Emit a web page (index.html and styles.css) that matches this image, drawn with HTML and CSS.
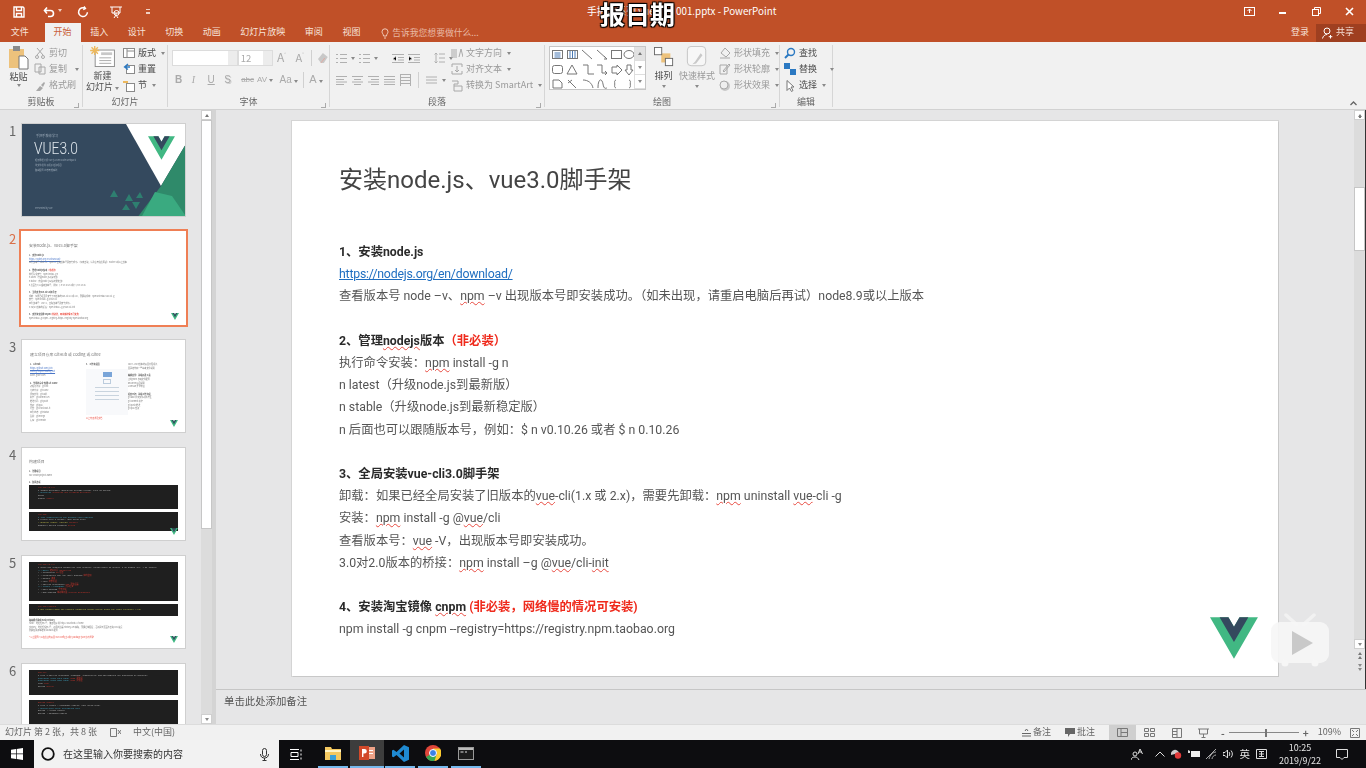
FILE: index.html
```html
<!DOCTYPE html>
<html lang="zh-CN">

<head>
    <meta charset="UTF-8">
    <meta name="viewport" content="width=device-width, initial-scale=1.0">
    <title>手把手系列 vue3.0 - 001.pptx - PowerPoint</title>
    <link rel="stylesheet" href="styles.css">
</head>

<body>
<svg class="defs" width="0" height="0">
    <defs>
        <g id="vue">
            <path fill="#41b883" d="M161.1 0l-30.2 52.4L100.6 0H0l130.9 226.7L261.7 0z"/>
            <path fill="#34495e" d="M161.1 0l-30.2 52.4L100.6 0H52.3l78.6 136L209.4 0z"/>
        </g>
    </defs>
</svg>
<div class="app">
    <header class="titlebar">
        <div class="qat">
            <svg class="qa-save" width="14" height="14" viewBox="0 0 14 14" fill="none" stroke="#fff" stroke-width="1.4"><path d="M2 2h9l1 1v9H2z"/><path d="M4.5 2v3.5h5V2M4.5 12V8.5h5V12"/></svg>
            <svg class="qa-undo" width="12" height="12" viewBox="0 0 12 12" fill="none" stroke="#fff" stroke-width="1.6"><path d="M1.5 4.5h6a3 3 0 0 1 0 6H5M4 1.5l-2.5 3 2.5 3"/></svg>
            <span class="qa-caret"></span>
            <svg class="qa-redo" width="12" height="12" viewBox="0 0 12 12" fill="none" stroke="#fff" stroke-width="1.5"><path d="M8 2.2a4.4 4.4 0 1 0 2.4 4M7 .5l1.4 2-2.2 1.2"/></svg>
            <svg class="qa-show" width="14" height="14" viewBox="0 0 14 14" fill="none" stroke="#fff" stroke-width="1"><path d="M1 2h12M3 2v6h8V2M7 8v2M5 13l2-3 2 3"/><circle cx="7.5" cy="8" r="2.5"/></svg>
            <span class="qa-more"></span>
        </div>
        <div class="doc-name">手把手系列 vue3.0 - 001.pptx - PowerPoint</div>
        <div class="win-btns">
            <svg width="11" height="9" viewBox="0 0 11 9" fill="none" stroke="#fff"><rect x=".5" y=".5" width="10" height="8"/><path d="M5.5 2v4M3.5 4l2-2 2 2"/></svg>
            <svg width="8" height="8" viewBox="0 0 8 8"><rect y="4" width="7" height="2" fill="#fff"/></svg>
            <svg width="9" height="9" viewBox="0 0 9 9" fill="none" stroke="#fff"><rect x=".5" y="2.5" width="6" height="6"/><path d="M2.5 2V.5h6v6H7"/></svg>
            <svg width="9" height="9" viewBox="0 0 9 9" stroke="#fff" stroke-width="1.6"><path d="M1 1l7 7M8 1L1 8"/></svg>
        </div>
    </header>

    <nav class="tabs">
        <a class="tab tab-file">文件</a>
        <a class="tab tab-on">开始</a>
        <a class="tab">插入</a>
        <a class="tab">设计</a>
        <a class="tab">切换</a>
        <a class="tab">动画</a>
        <a class="tab">幻灯片放映</a>
        <a class="tab">审阅</a>
        <a class="tab">视图</a>
        <div class="tellme">
            <svg width="8" height="11" viewBox="0 0 8 11" fill="none" stroke="#f0c9b8"><path d="M2.5 8C2.5 6 1 5.5 1 3.8a3 3 0 0 1 6 0C7 5.5 5.5 6 5.5 8zM3 10h2"/></svg>
            <span>告诉我您想要做什么...</span>
        </div>
        <div class="tabs-right">
            <span class="login">登录</span>
            <span class="share">
                <svg width="11" height="12" viewBox="0 0 11 12" fill="none" stroke="#fff"><circle cx="5" cy="4" r="3"/><path d="M.5 11.5C1 9 3 7.5 5 7.5M8.5 8v3.5M6.7 9.7h3.6"/></svg>
                共享
            </span>
        </div>
    </nav>

    <section class="ribbon">
        <div class="grp grp-clip">
            <div class="grp-body">
                <div class="big big-paste">
                    <svg width="22" height="24" viewBox="0 0 22 24"><rect x="1" y="3" width="15" height="19" fill="#edc27c"/><rect x="5" y="0" width="7" height="5" fill="#8a8a8a"/><path d="M11 10h6l3 3v10h-9z" fill="#fff" stroke="#777"/></svg>
                    <span class="dark">粘贴</span>
                    <span class="caret"></span>
                </div>
                <div class="col">
                    <div class="item"><svg width="12" height="12" viewBox="0 0 12 12" fill="none" stroke="#a8a8a8"><path d="M3 1l6 7M9 1L3 8"/><circle cx="3" cy="10" r="1.5"/><circle cx="9" cy="10" r="1.5"/></svg>剪切</div>
                    <div class="item"><svg width="12" height="12" viewBox="0 0 12 12" fill="none" stroke="#a8a8a8"><path d="M1 1h6v8H1zM5 4h6v7H5z"/></svg>复制<span class="caret caret-sp"></span></div>
                    <div class="item"><svg width="12" height="12" viewBox="0 0 12 12"><path d="M2 11l4-5 3 2-3 3zM7 5l3-3 1 1-2 4z" fill="#a8a8a8"/></svg>格式刷</div>
                </div>
            </div>
            <div class="grp-label">剪贴板<i class="launch"></i></div>
        </div>

        <div class="grp grp-slides">
            <div class="grp-body">
                <div class="big big-new">
                    <svg width="25" height="22" viewBox="0 0 27 24"><rect x="5.5" y="5.5" width="21" height="18" fill="#fff" stroke="#8a8a8a"/><path d="M10 14h13M10 17h13M10 20h13" stroke="#a5a5a5"/><rect x="12" y="8" width="12" height="3" fill="#c8c8c8"/><path d="M5 1v10M0 6h10M1.5 2.5l7 7M8.5 2.5l-7 7" stroke="#edb85c" stroke-width="1.5"/></svg>
                    <span class="dark">新建</span>
                    <span class="dark">幻灯片<i class="caret caret-in"></i></span>
                </div>
                <div class="col col-slides">
                    <div class="item dark"><svg width="12" height="12" viewBox="0 0 12 12" fill="#fff" stroke="#8a8a8a"><rect x=".5" y="1.5" width="11" height="9"/><path d="M4 1.5v9M4 4h7.5"/></svg>版式<i class="caret caret-in"></i></div>
                    <div class="item dark"><svg width="12" height="12" viewBox="0 0 12 12" fill="#fff" stroke="#2b79c2"><rect x="3.5" y="2.5" width="8" height="8" stroke="#8a8a8a"/><path d="M5 1L1.5 4 5 6.5M2 4h5" fill="none" stroke-width="1.3"/></svg>重置</div>
                    <div class="item dark"><svg width="12" height="12" viewBox="0 0 12 12" fill="#fff" stroke="#8a8a8a"><rect x="3.5" y="3.5" width="8" height="8"/><path d="M0 2h5" stroke="#edb85c" stroke-width="2"/></svg>节<i class="caret caret-in"></i></div>
                </div>
            </div>
            <div class="grp-label">幻灯片</div>
        </div>

        <div class="grp grp-font">
            <div class="grp-body font-rows">
                <div class="font-top">
                    <div class="combo combo-name"><i class="combo-arrow"></i></div>
                    <div class="combo combo-size">12<i class="combo-arrow"></i></div>
                    <span class="aa aa-lg">A<sup>˄</sup></span>
                    <span class="aa">A<sup>˅</sup></span>
                    <b class="vbar"></b>
                    <svg width="12" height="12" viewBox="0 0 12 12"><path d="M1 7l5-6 5 4-4 6H4z" fill="#c8c8c8"/><path d="M4 11l4-5" stroke="#e2a9a0"/></svg>
                </div>
                <div class="font-bottom">
                    <span class="fmt fb">B</span>
                    <span class="fmt fi">I</span>
                    <span class="fmt fu">U</span>
                    <span class="fmt fs">S</span>
                    <span class="fmt fa">abc</span>
                    <span class="fmt fav">AV<i class="caret caret-in"></i></span>
                    <span class="fmt faa">Aa<i class="caret caret-in"></i></span>
                    <b class="vbar"></b>
                    <span class="fmt fcol">A<i class="caret caret-in"></i></span>
                </div>
            </div>
            <div class="grp-label">字体<i class="launch"></i></div>
        </div>

        <div class="grp grp-para">
            <div class="grp-body">
                <div class="para-left">
                    <div class="para-row">
                        <svg width="11" height="11" viewBox="0 0 11 11" stroke="#b0b0b0"><path d="M0 1.5h2M4 1.5h7M0 5.5h2M4 5.5h7M0 9.5h2M4 9.5h7"/></svg><i class="caret"></i>
                        <svg width="11" height="11" viewBox="0 0 11 11" stroke="#b0b0b0"><path d="M0 1.5h2M4 1.5h7M0 5.5h2M4 5.5h7M0 9.5h2M4 9.5h7"/></svg><i class="caret"></i>
                        <b class="vbar"></b>
                        <svg width="12" height="11" viewBox="0 0 12 11" stroke="#b0b0b0"><path d="M0 1.5h12M6 4.5h6M6 7h6M0 9.5h12M4 3.5L1 5.7l3 2"/></svg>
                        <svg width="12" height="11" viewBox="0 0 12 11" stroke="#b0b0b0"><path d="M0 1.5h12M6 4.5h6M6 7h6M0 9.5h12M1 3.5l3 2.2-3 2"/></svg>
                        <b class="vbar"></b>
                        <svg width="11" height="12" viewBox="0 0 11 12" stroke="#b0b0b0"><path d="M2 1v10M5 2h6M5 6h6M5 10h6M.5 2.5L2 1l1.5 1.5M.5 9.5L2 11l1.5-1.5" fill="none"/></svg><i class="caret"></i>
                    </div>
                    <div class="para-row para-row2">
                        <svg width="11" height="9" viewBox="0 0 11 9" stroke="#b0b0b0"><path d="M0 .5h11M0 3.5h8M0 6h11M0 8.5h8"/></svg>
                        <svg width="11" height="9" viewBox="0 0 11 9" stroke="#b0b0b0"><path d="M0 .5h11M2 3.5h7M0 6h11M2 8.5h7"/></svg>
                        <svg width="11" height="9" viewBox="0 0 11 9" stroke="#b0b0b0"><path d="M0 .5h11M3 3.5h8M0 6h11M3 8.5h8"/></svg>
                        <svg width="11" height="9" viewBox="0 0 11 9" stroke="#b0b0b0"><path d="M0 .5h11M0 3.5h11M0 6h11M0 8.5h11"/></svg>
                        <svg width="11" height="12" viewBox="0 0 11 12" stroke="#b0b0b0"><path d="M0 .5h11M0 3.5h11M0 6.5h11M0 9.5h11M.5 0v12M10.5 0v12"/></svg>
                        <b class="vbar vbar-sp"></b>
                        <svg width="11" height="8" viewBox="0 0 11 8" stroke="#b0b0b0"><path d="M0 1h11M0 4h11M0 7h11"/></svg><i class="caret"></i>
                    </div>
                </div>
                <div class="col">
                    <div class="item"><svg width="12" height="12" viewBox="0 0 12 12" stroke="#a8a8a8" fill="none"><path d="M1 2v9M3 2v9M5 2v9M8 10l2-8 2 8"/></svg>文字方向<i class="caret caret-in"></i></div>
                    <div class="item"><svg width="12" height="12" viewBox="0 0 12 12" stroke="#a8a8a8" fill="none"><path d="M1 1h10M1 11h10M1 1v3M11 1v3M1 11V8M11 11V8M6 3v6M4 7l2 2 2-2"/></svg>对齐文本<i class="caret caret-in"></i></div>
                    <div class="item"><svg width="12" height="12" viewBox="0 0 12 12" stroke="#a8a8a8" fill="none"><path d="M1 1h6v3H3v7M3 6h8v5H3"/></svg>转换为 SmartArt<i class="caret caret-in"></i></div>
                </div>
            </div>
            <div class="grp-label">段落<i class="launch"></i></div>
        </div>

        <div class="grp grp-draw">
            <div class="grp-body">
                <div class="gallery">
                    <svg width="84" height="43" viewBox="0 0 84 43" fill="none" stroke="#777">
                        <rect x="2.5" y="3.5" width="10" height="8"/><path d="M4.5 6h6M4.5 8h6M4.5 10h6" stroke="#4a7ab5"/>
                        <rect x="17.5" y="3.5" width="10" height="8"/><path d="M20 4v7M22.5 4v7M25 4v7" stroke="#4a7ab5"/>
                        <path d="M32 3l10 9M47 3l10 9M54 9l3 3-3 0"/>
                        <rect x="61.5" y="3.5" width="10" height="8"/><ellipse cx="79" cy="7.5" rx="5" ry="4"/>
                        <rect x="2.5" y="18.5" width="10" height="8" rx="2"/><path d="M22 18l5 9H17zM33 18h5v9h6M47 18h5v8h5M55 24l2 2-2 2M62 20h5v-2l5 5-5 5v-2h-5zM77 18h4v5h2l-4 5-4-5h2z"/>
                        <path d="M3 33h6l3 3v5H3zM18 33l8 8M22 33l-4 3M33 33c5 0 9 3 10 8M48 41c0-10 4-10 5-4s3 4 4 4M66 33c-3 1 0 4-2 4 2 0-1 3 2 4M79 33c3 1 0 4 2 4-2 0 1 3-2 4"/>
                    </svg>
                    <div class="gallery-btns">
                        <span class="gb-off"><i class="tri-up"></i></span>
                        <span><i class="caret"></i></span>
                        <span><i class="caret caret-bar"></i></span>
                    </div>
                </div>
                <div class="big big-arrange">
                    <svg width="20" height="20" viewBox="0 0 22 22"><rect x="8" y="7" width="10" height="10" fill="#edc27c"/><rect x=".5" y=".5" width="8" height="8" fill="#fff" stroke="#666"/><rect x="12.5" y="12.5" width="8" height="8" fill="#fff" stroke="#666"/></svg>
                    <span class="dark">排列</span>
                    <span class="caret"></span>
                </div>
                <div class="big big-style">
                    <svg width="22" height="22" viewBox="0 0 22 24"><rect x=".5" y=".5" width="20" height="21" rx="4" fill="#f7f7f7" stroke="#c2c2c2"/><path d="M15 8l-6 9-3 3 4-1 7-9z" fill="#c9c9c9"/></svg>
                    <span>快速样式</span>
                    <span class="caret"></span>
                </div>
                <div class="col">
                    <div class="item"><svg width="12" height="12" viewBox="0 0 12 12" fill="none" stroke="#a8a8a8"><path d="M6 1l5 5-4 4-5-4zM1 11h10"/></svg>形状填充<i class="caret caret-in"></i></div>
                    <div class="item"><svg width="12" height="12" viewBox="0 0 12 12" fill="none" stroke="#a8a8a8"><path d="M1 2h7v9H1zM4 8l6-7 1 1-6 7z"/></svg>形状轮廓<i class="caret caret-in"></i></div>
                    <div class="item"><svg width="12" height="12" viewBox="0 0 12 12"><circle cx="6" cy="6" r="5" fill="#c8c8c8"/><circle cx="5" cy="5" r="4" fill="#eee" stroke="#a8a8a8"/></svg>形状效果<i class="caret caret-in"></i></div>
                </div>
            </div>
            <div class="grp-label">绘图<i class="launch"></i></div>
        </div>

        <div class="grp grp-edit">
            <div class="grp-body">
                <div class="col col-edit">
                    <div class="item dark"><svg width="12" height="12" viewBox="0 0 12 12" fill="none" stroke="#2b79c2" stroke-width="1.4"><circle cx="7" cy="5" r="3.5"/><path d="M4.5 7.5L1 11" stroke-width="2"/></svg>查找</div>
                    <div class="item dark"><svg width="12" height="12" viewBox="0 0 12 12"><rect x="0" y="0" width="6" height="6" fill="#2b79c2"/><rect x="6" y="6" width="6" height="6" fill="#2b79c2"/></svg>替换<i class="caret caret-far"></i></div>
                    <div class="item dark"><svg width="12" height="12" viewBox="0 0 12 12" fill="#fff" stroke="#777"><path d="M3 .5v10l2.5-2.5L7.5 11.5 9 10.5 7 7h3z"/></svg>选择<i class="caret caret-in"></i></div>
                </div>
            </div>
            <div class="grp-label">编辑</div>
        </div>
        <svg class="collapse" width="7" height="5" viewBox="0 0 7 5" fill="none" stroke="#666" stroke-width="1.3"><path d="M.5 4l3-3 3 3"/></svg>
    </section>

    <main class="workspace">
        <aside class="thumbs">
            <div class="thumb-list">
                <div class="thumb-row">
                    <span class="num">1</span>
                    <div class="thumb">
                        <svg class="cover" viewBox="0 0 165 94">
                            <rect width="165" height="94" fill="#34495e"/>
                            <path d="M104 0h61v18l-26 44z" fill="#fff"/>
                            <path d="M139 62l26-44v76h-50z" fill="#2f8a6a"/>
                            <path d="M150 72l15 22h-46l14-26z" fill="#3aaa80"/>
                            <path d="M92 66l4 7h-8zM107 70l4 7h-8zM118 68l3 6h-7zM100 86l4-6 4 6zM110 78h8l-4 7z" fill="#2e7f70"/>
                            <svg x="126" y="12" width="27" height="24" viewBox="0 0 262 227"><use href="#vue"/></svg>
                            <text class="cv-sub" x="14" y="13">手把手教你学习</text>
                            <text class="cv-big" x="12" y="30" textLength="44" lengthAdjust="spacingAndGlyphs">VUE3.0</text>
                            <text class="cv-sm" x="13" y="37">框架原理分析  Vue.js  Vue3  Node  Webpack</text>
                            <text class="cv-sm" x="13" y="42">单文件组件  手把手搭建项目</text>
                            <text class="cv-sm" x="13" y="47">路由配置 状态管理实践</text>
                            <text class="cv-sm" x="13" y="85">Presented by vue</text>
                        </svg>
                    </div>
                </div>
                <div class="thumb-row thumb-row-on">
                    <span class="num">2</span>
                    <div class="thumb thumb-on">
                        <h4>安装node.js、vue3.0脚手架</h4>
                        <p><b>1、安装node.js</b></p>
                        <p class="lnk">https://nodejs.org/en/download/</p>
                        <p>查看版本号 node –v、npm –v 出现版本号即安装成功。（如未出现，请重启电脑后再试）node8.9或以上版本</p>
                        <p class="gap"><b>2、管理nodejs版本</b><b class="red">（非必装）</b></p>
                        <p>执行命令安装：npm install -g n</p>
                        <p>n latest（升级node.js到最新版）</p>
                        <p>n stable（升级node.js到最新稳定版）</p>
                        <p>n 后面也可以跟随版本号，例如：$ n v0.10.26 或者 $ n 0.10.26</p>
                        <p class="gap"><b>3、全局安装vue-cli3.0脚手架</b></p>
                        <p>卸载：如果已经全局安装了旧版本的vue-cli(1.x 或 2.x)，需要先卸载：npm uninstall vue-cli -g</p>
                        <p>安装：npm install -g @vue/cli</p>
                        <p>查看版本号：vue -V，出现版本号即安装成功。</p>
                        <p>3.0对2.0版本的桥接：npm install –g @vue/cli-init</p>
                        <p class="gap"><b>4、安装淘宝镜像 cnpm</b> <b class="red">(非必装，网络慢的情况可安装)</b></p>
                        <p>npm install -g cnpm --registry=https://registry.npm.taobao.org</p>
                        <svg class="mini-vue" viewBox="0 0 262 227"><use href="#vue"/></svg>
                    </div>
                </div>
                <div class="thumb-row">
                    <span class="num">3</span>
                    <div class="thumb thumb-three">
                        <h4>建立项目仓库 GitHub 或 Coding 或 Gitee</h4>
                        <div class="three-cols">
                            <div>
                                <p><b>1、GitHub</b></p>
                                <p class="lnk">https://github.com/join</p>
                                <p class="lnk">Coding: https://coding.net</p>
                                <p>Gitee: gitee.com</p>
                                <p class="gap"><b>2、常用的命令 新建 Git clone</b></p>
                                <p>初始化仓库：git init</p>
                                <p>克隆仓库：git clone</p>
                                <p>添加文件：git add .</p>
                                <p>提交：git commit -m</p>
                                <p>推送代码：git push</p>
                                <p>拉取：git pull</p>
                                <p>分支：git checkout -b</p>
                                <p>查看状态：git status</p>
                                <p>合并：git merge</p>
                                <p>远程：git remote</p>
                            </div>
                            <div>
                                <p><b>3、工作流程图</b></p>
                                <div class="flow"><i class="flow-a"></i><i class="flow-b"></i><i class="flow-c"></i><i class="flow-c"></i><i class="flow-c"></i><i class="flow-c"></i></div>
                                <p class="red">以上内容详见文档</p>
                            </div>
                            <div>
                                <p>Vue3 - vue3版本的项目管理规范</p>
                                <p>目录结构和一些基本文件说明</p>
                                <p class="gap"><b>编辑文件：前端开发工具</b></p>
                                <p>.gitignore 忽略文件配置</p>
                                <p>README 项目说明</p>
                                <p>LICENSE 开源协议</p>
                                <p class="gap"><b>提交代码：前端工作流程</b></p>
                                <p>git add 添加文件到暂存区</p>
                                <p>git commit 提交</p>
                                <p>git push 推送</p>
                                <p>git pull 拉取</p>
                            </div>
                        </div>
                        <svg class="mini-vue" viewBox="0 0 262 227"><use href="#vue"/></svg>
                    </div>
                </div>
                <div class="thumb-row">
                    <span class="num">4</span>
                    <div class="thumb thumb-code">
                        <h4>构建项目</h4>
                        <p><b>1、创建项目</b></p>
                        <p>vue create project-name</p>
                        <p class="gap"><b>2、配置选项</b></p>
                        <div class="code code-a">
                            <p class="c-red">Vue CLI v3.0.0</p>
                            <p>? Target directory /Users/vue already exists. Pick an action:</p>
                            <p class="c-blue">&gt; Overwrite  <span class="c-red">overwrite the existing directory</span></p>
                            <p>  Merge</p>
                            <p>  Cancel <span class="c-red">cancel</span></p>
                        </div>
                        <div class="code code-b">
                            <p class="c-red">Vue CLI</p>
                            <p class="c-blue">? Your connection to the default yarn registry</p>
                            <p>? Please pick a preset: (Use arrow keys)</p>
                            <p class="c-yel">&gt; default (babel, eslint)  <span class="c-red">default</span></p>
                            <p>  Manually select features  <span class="c-red">select</span></p>
                        </div>
                        <svg class="mini-vue" viewBox="0 0 262 227"><use href="#vue"/></svg>
                    </div>
                </div>
                <div class="thumb-row">
                    <span class="num">5</span>
                    <div class="thumb thumb-code thumb-five">
                        <div class="code code-c">
                            <p class="c-red">Vue CLI v3.0.0</p>
                            <p>? Check the features needed for your project: (Press space to select, a to toggle all, i to invert)</p>
                            <p class="c-blue">(*) Babel  <span class="c-red">转码工具 JavaScript</span></p>
                            <p>( ) TypeScript  <span class="c-red">TS 语言</span></p>
                            <p>( ) Progressive Web App (PWA) Support  <span class="c-red">离线应用</span></p>
                            <p>( ) Router  <span class="c-red">路由</span></p>
                            <p>( ) Vuex  <span class="c-red">状态管理</span></p>
                            <p>( ) CSS Pre-processors  <span class="c-red">CSS 预处理器</span></p>
                            <p class="c-blue">(*) Linter / Formatter  <span class="c-red">代码检查</span></p>
                            <p>( ) Unit Testing  <span class="c-red">单元测试</span></p>
                            <p>( ) E2E Testing  <span class="c-red">端到端测试 Cypress Nightwatch</span></p>
                        </div>
                        <div class="code code-d">
                            <p class="c-red">Vue CLI project</p>
                            <p class="c-yel">? Use history mode for router? (Requires proper server setup for index fallback) (Y/n)</p>
                        </div>
                        <p class="tight"><b>路由模式说明 Hash History</b></p>
                        <p class="tight">Hash：地址栏有#号，兼容性好 例 http://localhost/#/home</p>
                        <p class="tight">History：地址栏没有#号，使用浏览器 History API 实现，需要后端配合，否则刷新页面会出现 404 错误</p>
                        <p class="tight">需要在服务端增加 fallback 配置</p>
                        <p class="gap red">* 以上配置可以在后续的项目 vue.config.js 或者 package.json 修改调整</p>
                        <svg class="mini-vue" viewBox="0 0 262 227"><use href="#vue"/></svg>
                    </div>
                </div>
                <div class="thumb-row">
                    <span class="num">6</span>
                    <div class="thumb thumb-code thumb-five">
                        <div class="code code-e">
                            <p class="c-red">CSS Pre</p>
                            <p>? Pick a CSS pre-processor (PostCSS, Autoprefixer and CSS Modules are supported by default):</p>
                            <p class="c-blue">  Sass/SCSS (with dart-sass)  <span class="c-red">Sass 预处理</span></p>
                            <p class="c-blue">  Sass/SCSS (with node-sass)  <span class="c-red">Sass 预处理</span></p>
                            <p>  Less  <span class="c-red">Less</span></p>
                            <p>  Stylus  <span class="c-red">Stylus</span></p>
                        </div>
                        <div class="code code-f">
                            <p class="c-red">ESLint config</p>
                            <p>? Pick a linter / formatter config: (Use arrow keys)</p>
                            <p class="c-blue">&gt; ESLint with error prevention only</p>
                            <p>  ESLint + Airbnb config</p>
                            <p>  ESLint + Standard config</p>
                        </div>
                    </div>
                </div>
            </div>
            <div class="thumb-scroll">
                <span class="sb-btn"><i class="tri-up"></i></span>
                <span class="sb-thumb"></span>
                <span class="sb-space"></span>
                <span class="sb-btn"><i class="caret"></i></span>
            </div>
        </aside>
        <div class="splitter"></div>

        <div class="editor">
            <div class="stage">
                <article class="slide">
                    <h1>安装node.js、vue3.0脚手架</h1>
                    <p><b>1、安装node.js</b></p>
                    <p><a class="link">https://nodejs.org/en/download/</a></p>
                    <p>查看版本号 node –v、<u>npm</u> –v 出现版本号即安装成功。（如未出现，请重启电脑后再试）node8.9或以上版本</p>
                    <p class="blank"><b>2、管理<u>nodejs</u>版本</b><b class="red">（非必装）</b></p>
                    <p>执行命令安装：<u>npm</u> install -g n</p>
                    <p>n latest（升级node.js到最新版）</p>
                    <p>n stable（升级node.js到最新稳定版）</p>
                    <p>n 后面也可以跟随版本号，例如：$ n v0.10.26 或者 $ n 0.10.26</p>
                    <p class="blank"><b>3、全局安装vue-cli3.0脚手架</b></p>
                    <p>卸载：如果已经全局安装了旧版本的<u>vue</u>-cli(1.x 或 2.x)，需要先卸载：<u>npm</u> uninstall <u>vue</u>-cli -g</p>
                    <p>安装：<u>npm</u> install -g @<u>vue</u>/cli</p>
                    <p>查看版本号：<u>vue</u> -V，出现版本号即安装成功。</p>
                    <p>3.0对2.0版本的桥接：<u>npm</u> install –g @<u>vue</u>/cli-<u>init</u></p>
                    <p class="blank"><b>4、安装淘宝镜像 <u>cnpm</u></b> <b class="red">(非必装，网络慢的情况可安装)</b></p>
                    <p>npm install -g cnpm --registry=https://registry.npm.taobao.org</p>
                    <svg class="slide-logo" viewBox="0 0 262 227"><use href="#vue"/></svg>
                </article>
                <div class="stage-scroll">
                    <span class="sb-btn"><i class="tri-up tri-bar"></i></span>
                    <span class="sb-gap"></span>
                    <span class="sb-thumb2"></span>
                    <span class="sb-space"></span>
                    <span class="sb-btn"><i class="caret"></i></span>
                    <span class="page-btn"><i class="tri-up"></i><i class="tri-up"></i></span>
                    <span class="page-btn"><i class="caret"></i><i class="caret"></i></span>
                    <span class="sb-foot"></span>
                </div>
            </div>
            <div class="notes">单击此处添加备注</div>
        </div>
    </main>

    <footer class="status">
        <span class="st-page">幻灯片 第 2 张，共 8 张</span>
        <svg class="st-spell" width="11" height="10" viewBox="0 0 11 10" fill="none" stroke="#777"><path d="M.5.5h6v8h-6zM8 2l3 4M11 2L8 6"/></svg>
        <span class="st-lang">中文(中国)</span>
        <div class="st-right">
            <span class="st-btn"><svg width="9" height="9" viewBox="0 0 9 9" fill="none" stroke="#666"><path d="M0 5.5h9M0 8h9M3 3l1.5-2L6 3"/></svg>备注</span>
            <span class="st-btn"><svg width="10" height="9" viewBox="0 0 10 9"><path d="M0 0h10v6H5L3 9V6H0z" fill="#666"/></svg>批注</span>
            <span class="view view-on"><svg width="11" height="9" viewBox="0 0 11 9" fill="none" stroke="#777"><path d="M.5.5h10v8H.5zM4 .5v8M4 4.5h6"/></svg></span>
            <span class="view"><svg width="11" height="9" viewBox="0 0 11 9" fill="none" stroke="#777"><path d="M.5.5h4v3h-4zM6.5.5h4v3h-4zM.5 5.5h4v3h-4zM6.5 5.5h4v3h-4z"/></svg></span>
            <span class="view"><svg width="10" height="10" viewBox="0 0 10 10" fill="none" stroke="#777"><path d="M.5.5h9v9h-9zM5 .5v9M.5 3.5H5M.5 6.5H5"/></svg></span>
            <span class="view"><svg width="11" height="10" viewBox="0 0 11 10" fill="none" stroke="#777"><path d="M0 1h11M1.5 1v5h8V1M5.5 6v3M3.5 9.5h4"/></svg></span>
            <div class="zoom-bar">
                <span class="z-sign">-</span>
                <span class="z-track"><i class="z-knob"></i></span>
                <span class="z-sign">+</span>
            </div>
            <span class="z-pct">109%</span>
            <svg class="z-fit" width="10" height="10" viewBox="0 0 10 10" fill="none" stroke="#777"><path d="M.5.5h9v9h-9zM2 2l2 2M8 2L6 4M2 8l2-2M8 8L6 6"/></svg>
        </div>
    </footer>

    <div class="taskbar">
        <svg class="tb-start" width="12" height="12" viewBox="0 0 12 12" fill="#fff"><path d="M0 1.7L5 1v4.6H0zM5.7.9L12 0v5.6H5.7zM0 6.3h5V11l-5-.7zM5.7 6.3H12V12l-6.3-.9z"/></svg>
        <div class="tb-search">
            <svg width="14" height="14" viewBox="0 0 14 14" fill="none" stroke="#111" stroke-width="1.8"><circle cx="7" cy="7" r="5.8"/></svg>
            <span>在这里输入你要搜索的内容</span>
            <svg class="tb-mic" width="9" height="13" viewBox="0 0 9 13" fill="none" stroke="#333"><rect x="2.5" y=".5" width="4" height="8" rx="2"/><path d="M.5 6c0 3 2 4 4 4s4-1 4-4M4.5 10v2.5M2.5 12.5h4"/></svg>
        </div>
        <svg class="tb-view" width="12" height="11" viewBox="0 0 12 11" fill="none" stroke="#fff"><path d="M0 .5h9M0 10.5h9M1 3.5h7v4H1zM11 .5v2M11 4.5v2M11 8.5v2"/></svg>
        <span class="tb-app tb-first">
            <svg width="16" height="14" viewBox="0 0 16 14"><path d="M0 1h6l1 2h9v11H0z" fill="#f3c860"/><rect x="0" y="4" width="16" height="2" fill="#fff3c4"/><rect x="5" y="9" width="6" height="5" fill="#3aa0d8"/></svg>
        </span>
        <span class="tb-app tb-active">
            <svg width="16" height="16" viewBox="0 0 16 16"><rect x="5" y="2" width="11" height="12" fill="#eea287"/><rect x="9" y="5" width="5" height="1" fill="#fff"/><rect x="9" y="8" width="5" height="1" fill="#fff"/><rect x="0" y="1" width="10" height="14" fill="#d2492a"/><path d="M3 12V4h2.5a2.2 2.2 0 0 1 0 4.6H4.4V12z" fill="#fff"/></svg>
        </span>
        <span class="tb-app">
            <svg width="17" height="17" viewBox="0 0 17 17"><path d="M12 0l5 2.2v12.600L12 17 4.5 10 1.5 12.300 0 11.5V5.5l1.5-.8L4.5 7zM12 4.5L7.5 8.500l4.500 4z" fill="#1f8ad2"/></svg>
        </span>
        <span class="tb-app">
            <svg width="16" height="16" viewBox="0 0 16 16"><circle cx="8" cy="8" r="8" fill="#e0463a"/><path d="M8 8L1 12a8 8 0 0 0 8 4l3.5-4z" fill="#36a853"/><path d="M8 8l4 0-2.5 8A8 8 0 0 0 15 3.5H8z" fill="#fbcb2f"/><circle cx="8" cy="8" r="3.5" fill="#3b82e8" stroke="#fff"/></svg>
        </span>
        <span class="tb-app">
            <svg width="16" height="13" viewBox="0 0 16 13"><rect x=".5" y=".5" width="15" height="12" fill="#1c1c1c" stroke="#999"/><rect x="1" y="1" width="14" height="2" fill="#bbb"/><path d="M2.5 5h3M7 5h2" stroke="#ddd"/></svg>
        </span>
        <div class="tray">
            <svg width="12" height="11" viewBox="0 0 12 11" fill="none" stroke="#ddd"><circle cx="4" cy="5" r="2"/><path d="M0 11c0-2 2-3 4-3s3 1 4 3M9 0l2.5 5M9 0L7 5M8 3h3"/></svg>
            <svg class="tr-up" width="10" height="6" viewBox="0 0 10 6" fill="none" stroke="#ddd"><path d="M.5 5.5L5 1l4.5 4.5"/></svg>
            <svg width="11" height="10" viewBox="0 0 11 10"><path d="M0 6a4 4 0 0 1 8-2z" fill="#ccc"/><circle cx="7" cy="6.5" r="3.2" fill="#e03a3a"/></svg>
            <svg width="12" height="8" viewBox="0 0 12 8"><path d="M0 0l2 1v2H0z" fill="#ddd"/><rect x="3" y="1" width="9" height="6" fill="#eee"/></svg>
            <svg width="11" height="10" viewBox="0 0 11 10" fill="none" stroke="#aaa"><path d="M0 10L10 0M3 10C4 6 7 3 10 3M6 10c0-2 2-4 4-4"/></svg>
            <svg width="10" height="10" viewBox="0 0 10 10" fill="none" stroke="#ddd"><path d="M0 3.5h2L4.5 1v8L2 6.5H0zM6 3c1 1 1 3 0 4M8 1.5c1.800 2 1.800 5 0 7"/></svg>
            <span class="tr-ime">英</span>
            <svg width="11" height="10" viewBox="0 0 11 10" fill="none" stroke="#ddd"><path d="M.5.5h10v9H.5zM3 2.5h5M5.5 2.5v5M3 5h5M3 7.5h5"/></svg>
            <div class="clock"><span>10:25</span><span>2019/9/22</span></div>
            <svg class="tr-note" width="12" height="11" viewBox="0 0 12 11" fill="none" stroke="#ddd"><path d="M.5.5h11v8H8L6 10.5 4 8.5H.5z"/></svg>
        </div>
    </div>

    <div class="stamp">报日期</div>
    <div class="player">
        <svg width="62" height="56" viewBox="0 0 62 56">
            <path d="M17 2l10 9M45 2L35 11" stroke="#f2f2f2" stroke-width="3.5" stroke-linecap="round"/>
            <rect x="2" y="9" width="58" height="41" rx="9" fill="#f6f6f6" fill-opacity=".92"/>
            <circle cx="16" cy="50" r="3.5" fill="#f6f6f6"/>
            <circle cx="46" cy="50" r="3.5" fill="#f6f6f6"/>
            <path d="M23 18l21 12-21 12z" fill="#c9c9c9"/>
        </svg>
    </div>
</div>
</body>

</html>
```

FILE: styles.css
```css
* {
    box-sizing: border-box;
}

body {
    margin: 0;
    background: #111;
    font-family: "Noto Sans CJK SC", "Noto Sans", sans-serif;
    font-size: 9px;
    line-height: 1.2;
    color: #9a9a9a;
    overflow: hidden;
}

p, h1, h4 {
    margin: 0;
    font-weight: 400;
}

i {
    font-style: normal;
}

.defs {
    position: absolute;
}

.app {
    position: relative;
    display: flex;
    flex-direction: column;
    width: 1366px;
    height: 768px;
    overflow: hidden;
    filter: blur(.35px);
}

/* title + tabs */
.titlebar {
    display: flex;
    align-items: center;
    height: 23px;
    background: #c05028;
    color: #fff;
    flex: none;
}

.qat {
    display: flex;
    align-items: center;
    width: 587px;
    padding-left: 12px;
}

.qa-undo {
    margin-left: 17px;
}

.qa-caret {
    margin-left: 3px;
    border: 2px solid transparent;
    border-top: 3px solid #f0d0c2;
}

.qa-redo {
    margin-left: 15px;
}

.qa-show {
    margin-left: 20px;
}

.qa-more {
    margin-left: 23px;
    width: 4px;
    height: 5px;
    border-top: 1px solid #f0d0c2;
    border-bottom: 2px solid #f0d0c2;
}

.doc-name {
    font-size: 9.8px;
    white-space: nowrap;
}

.win-btns {
    display: flex;
    align-items: center;
    justify-content: space-between;
    width: 110px;
    margin-left: auto;
    margin-right: 12px;
}

.tabs {
    display: flex;
    align-items: center;
    height: 19px;
    padding-left: 1px;
    background: #c05028;
    color: #f7e3da;
    flex: none;
}

.tab {
    display: block;
    height: 19px;
    padding: 4px 9.75px 0;
    white-space: nowrap;
}

.tab-file {
    margin-right: 6px;
}

.tab-on {
    padding: 4px 9px 0;
    background: #f1f1f1;
    color: #c9603a;
}

.tellme {
    display: flex;
    align-items: center;
    gap: 3px;
    margin-left: 11px;
    padding-top: 1px;
    color: #e8b8a4;
}

.tellme span {
    font-size: 8.8px;
}

.tabs-right {
    display: flex;
    align-items: center;
    margin-left: auto;
    height: 19px;
}

.login {
    margin-right: 7px;
}

.share {
    display: flex;
    align-items: center;
    gap: 3px;
    width: 50px;
    height: 18px;
    padding-left: 6px;
    background: #9f3f20;
}

/* ribbon */
.ribbon {
    position: relative;
    display: flex;
    height: 68px;
    padding-top: 3px;
    background: #f1f1f1;
    border-bottom: 1px solid #d2d2d2;
    flex: none;
}

.grp {
    display: flex;
    flex-direction: column;
    height: 62px;
    border-right: 1px solid #d6d6d6;
}

.grp-clip { width: 83px; }
.grp-slides { width: 85px; }
.grp-font { width: 162px; }
.grp-para { width: 215px; }
.grp-draw { width: 235px; }
.grp-edit { width: 53px; }

.grp-body {
    display: flex;
    height: 49px;
    flex: none;
}

.grp-label {
    position: relative;
    margin-top: 3px;
    text-align: center;
    color: #666;
}

.launch {
    position: absolute;
    right: 3px;
    top: 6px;
    width: 5px;
    height: 5px;
    border: 1px solid #aaa;
    border-width: 0 1px 1px 0;
}

.collapse {
    align-self: flex-end;
    margin: 0 9px 3px auto;
}

.dark {
    color: #4c4c4c;
}

.big {
    display: flex;
    flex-direction: column;
    align-items: center;
    line-height: 11px;
}

.big-paste {
    width: 34px;
    padding-left: 3px;
    padding-top: 1px;
}

.big-paste svg {
    margin-bottom: 1px;
}

.big-paste .caret {
    margin-top: 2px;
}

.big-new {
    width: 37px;
    margin-left: 1px;
}

.big-new svg {
    margin-bottom: 3px;
}

.col-slides {
    margin-left: 2px;
}

.big-arrange {
    width: 30px;
    margin-left: 3px;
    padding-top: 2px;
}

.big-arrange svg {
    margin-bottom: 3px;
}

.big-style svg {
    margin-bottom: 2px;
}

.big-style {
    width: 39px;
    margin-right: 3px;
    padding-top: 1px;
}

.big-arrange .caret,
.big-style .caret {
    margin-top: 4px;
}

.col {
    display: flex;
    flex-direction: column;
}

.col-edit {
    margin-left: 4px;
}

.item {
    display: flex;
    align-items: center;
    gap: 3px;
    height: 16.5px;
    white-space: nowrap;
}

.caret {
    display: inline-block;
    border: 2.5px solid transparent;
    border-top: 3px solid #8a8a8a;
    border-bottom: 0;
}

.caret-in {
    margin-left: 2px;
}

.caret-sp {
    margin-left: 5px;
}

.caret-far {
    margin-left: 10px;
}

.caret-bar {
    box-shadow: 0 -3px 0 -1.5px #8a8a8a;
}

.tri-up {
    display: block;
    border: 2.5px solid transparent;
    border-bottom: 3px solid #777;
    border-top: 0;
}

.tri-bar {
    box-shadow: 0 2px 0 -1px #777;
}

.vbar {
    display: block;
    width: 1px;
    height: 16px;
    background: #d0d0d0;
}

/* font group */
.font-rows {
    flex-direction: column;
    padding: 4px 0 0 4px;
}

.font-top {
    display: flex;
    align-items: center;
    height: 17px;
}

.font-bottom {
    display: flex;
    align-items: center;
    height: 19px;
    margin-top: 4px;
    padding-left: 3px;
}

.combo {
    position: relative;
    height: 16px;
    background: #fff;
    border: 1px solid #dcdcdc;
    padding-left: 2px;
    font-size: 9.5px;
    line-height: 14px;
    color: #aaa;
}

.combo-name {
    width: 67px;
}

.combo-size {
    width: 36px;
}

.combo-arrow {
    position: absolute;
    right: 0;
    top: 0;
    width: 9px;
    height: 14px;
    background: #ececec;
}

.aa {
    margin-left: 4px;
    width: 15px;
    font-size: 11px;
    color: #aaa;
}

.aa-lg {
    font-size: 12px;
}

.aa sup {
    font-size: 6px;
    line-height: 0;
}

.font-top .vbar {
    margin: 0 5px 0 1px;
}

.fmt {
    font-family: "Liberation Sans", sans-serif;
    font-size: 10px;
    color: #aaa;
    white-space: nowrap;
}

.fb { font-weight: 700; width: 17px; }
.fi { font-style: italic; width: 16px; font-family: "Liberation Serif", serif; }
.fu { text-decoration: underline; width: 17px; }
.fs { width: 17px; text-shadow: 1px 1px 0 #ccc; }
.fa { width: 16px; font-size: 8px; text-decoration: line-through; }
.fav { width: 23px; font-size: 8px; }
.faa { width: 24px; }
.fcol { font-size: 11px; width: 20px; margin-left: 5px; }

/* paragraph group */
.para-left {
    display: flex;
    flex-direction: column;
    width: 121px;
    padding: 4px 0 0 6px;
}

.para-row {
    display: flex;
    align-items: center;
    gap: 4px;
    height: 18px;
    white-space: nowrap;
}

.para-row2 {
    margin-top: 4px;
    gap: 5px;
}

.para-row .vbar {
    margin: 0 3px;
}

.para-row svg {
    flex: none;
}

.para-row .vbar-sp {
    margin: 0 2px;
}

/* drawing group */
.gallery {
    display: flex;
    width: 97px;
    height: 44px;
    margin: 1px 0 0 4px;
    border: 1px solid #c6c6c6;
    background: #fff;
}

.gallery svg {
    flex: none;
}

.gallery-btns {
    display: flex;
    flex-direction: column;
    width: 11px;
    border-left: 1px solid #dedede;
}

.gallery-btns span {
    display: flex;
    align-items: center;
    justify-content: center;
    height: 14px;
    flex: 1;
    border-bottom: 1px solid #dedede;
}

.gallery-btns .gb-off {
    background: #e2e2e2;
}

/* workspace */
.workspace {
    display: flex;
    height: 614px;
    flex: none;
}

.thumbs {
    display: flex;
    width: 212px;
    background: #e6e6e7;
    flex: none;
}

.thumb-list {
    width: 201px;
    padding-top: 13px;
    overflow: hidden;
    flex: none;
}

.thumb-row {
    display: flex;
    height: 108px;
    padding-left: 9px;
}

.num {
    width: 12px;
    font-size: 13px;
    line-height: 16px;
    color: #666;
}

.thumb {
    position: relative;
    width: 165px;
    height: 94px;
    padding: 10px 8px 0;
    background: #fff;
    border: 1px solid #cfcfcf;
    font-size: 2.05px;
    line-height: 3.7px;
    color: #777;
    white-space: nowrap;
    overflow: hidden;
    flex: none;
}

.thumb h4 {
    margin: 2px 0 6px;
    font-size: 3.9px;
    line-height: 5px;
}

.thumb b {
    font-weight: 700;
    color: #555;
}

.thumb .red {
    color: #ec4a3e;
}

.thumb .lnk {
    color: #4a76c8;
    text-decoration: underline;
}

.thumb .gap {
    margin-top: 3.7px;
}

.thumb-row-on .num {
    color: #d9704a;
}

.thumb-on {
    width: 169px;
    height: 98px;
    margin: -2px 0 0 -2px;
    border: 2px solid #ef7f55;
}

.mini-vue {
    position: absolute;
    right: 7px;
    bottom: 5px;
    width: 8px;
    height: 7px;
}

.cover {
    position: absolute;
    left: 0;
    top: 0;
    width: 165px;
    height: 94px;
}

.cv-sub { font-size: 3.2px; fill: #97a6b5; }
.cv-big { font-size: 16px; fill: #dfe6ec; font-family: Roboto, sans-serif; font-weight: 300; }
.cv-sm { font-size: 2.2px; fill: #9aa8b6; }

.three-cols {
    display: grid;
    grid-template-columns: 56px 42px 1fr;
    gap: 0;
}

.flow {
    display: flex;
    flex-direction: column;
    align-items: center;
    gap: 2px;
    height: 46px;
    margin: 2px 0;
    padding: 3px 0;
    background: #f8f9fb;
}

.flow-a {
    width: 9px;
    height: 5px;
    background: #7aa5d8;
}

.flow-b {
    width: 8px;
    height: 5px;
    border: 1px solid #bcd;
}

.flow-c {
    width: 24px;
    height: 2px;
    border-bottom: 1px solid #c9d4de;
}

.thumb-code {
    padding-top: 9px;
    padding-left: 7px;
    padding-right: 7px;
}

.thumb-five {
    padding-top: 6px;
}

.thumb-code .tight {
    line-height: 3.4px;
}

.code {
    margin-bottom: 3px;
    padding: 2px 9px;
    background: #1f1f1f;
    font-family: "Liberation Mono", "Noto Sans CJK SC", monospace;
    font-size: 2px;
    line-height: 2.8px;
    color: #bdbdbd;
    overflow: hidden;
}

.code-a { height: 24px; }
.code-b { height: 19px; }
.code-c { height: 39px; }
.code-d { height: 12px; }
.code-e { height: 25px; }
.code-f { height: 25px; margin-top: 5px; }

.c-red { color: #c8342b; }
.c-blue { color: #3ea4c0; }
.c-yel { color: #c8c44a; }

.thumb-scroll {
    display: flex;
    flex-direction: column;
    width: 11px;
    background: #dcdcdc;
    flex: none;
}

.sb-btn {
    display: flex;
    align-items: center;
    justify-content: center;
    height: 10px;
    background: #fff;
    border: 1px solid #cfcfcf;
    flex: none;
}

.sb-thumb {
    height: 409px;
    background: #fff;
    border: 1px solid #c6c6c6;
    flex: none;
}

.sb-space {
    flex: 1;
}

.splitter {
    width: 4px;
    background: #d4d4d4;
    flex: none;
}

/* editor */
.editor {
    display: flex;
    flex-direction: column;
    flex: 1;
    min-width: 0;
}

.stage {
    display: flex;
    height: 579px;
    padding: 11px 0 0 76px;
    background: #e6e6e7;
    flex: none;
}

.slide {
    position: relative;
    width: 986px;
    height: 555px;
    padding: 46px 0 0 47px;
    background: #fff;
    box-shadow: 1px 1px 0 #c8c8c8, 0 0 0 1px #d4d4d4;
    font-family: Roboto, "Noto Sans CJK SC", sans-serif;
    font-size: 12.3px;
    line-height: 22.2px;
    color: #555;
    white-space: nowrap;
    flex: none;
}

.slide h1 {
    height: 74px;
    font-size: 24px;
    line-height: 27px;
    color: #444;
}

.slide b {
    color: #2a2a2a;
}

.slide b.red {
    color: #ef2a1c;
}

.slide u {
    text-decoration: underline wavy #e84a40 1px;
    text-underline-offset: 1px;
}

.slide .blank {
    margin-top: 22.2px;
}

.link {
    color: #1f6ec0;
    letter-spacing: -.2px;
    text-decoration: underline;
}

.slide-logo {
    position: absolute;
    left: 918px;
    top: 496px;
    width: 48px;
    height: 42px;
}

.stage-scroll {
    display: flex;
    flex-direction: column;
    width: 12px;
    height: 579px;
    margin: -11px 0 0 auto;
    background: #dcdcdc;
    border-right: 1px solid #333;
}

.sb-gap {
    height: 67px;
    flex: none;
}

.sb-thumb2 {
    height: 64px;
    background: #fff;
    border: 1px solid #c6c6c6;
    flex: none;
}

.page-btn {
    display: flex;
    flex-direction: column;
    align-items: center;
    gap: 1px;
    height: 12.5px;
    padding-top: 2.5px;
    background: #e6e6e7;
    flex: none;
}

.sb-foot {
    height: 15px;
    background: #e6e6e7;
    flex: none;
}

.notes {
    height: 35px;
    padding: 5px 0 0 8px;
    background: #e6e6e7;
    border-top: 1px solid #c6c6c6;
    font-size: 10.4px;
    color: #555;
}

/* status */
.status {
    display: flex;
    align-items: center;
    height: 16px;
    padding-left: 5px;
    background: #f1f1f1;
    border-top: 1px solid #dcdcdc;
    color: #666;
    flex: none;
}

.st-spell {
    margin-left: 13px;
}

.st-lang {
    margin-left: 12px;
}

.st-right {
    display: flex;
    align-items: center;
    height: 15px;
    margin-left: auto;
}

.st-btn {
    display: flex;
    align-items: center;
    gap: 2px;
    margin-right: 14px;
}

.view {
    display: flex;
    align-items: center;
    justify-content: center;
    width: 27px;
    height: 15px;
}

.view-on {
    background: #cfcfcf;
}

.zoom-bar {
    display: flex;
    align-items: center;
    gap: 4px;
    margin-left: 4px;
}

.z-sign {
    font-size: 10px;
    font-weight: 700;
}

.z-track {
    position: relative;
    display: block;
    width: 70px;
    height: 1px;
    background: #888;
}

.z-knob {
    position: absolute;
    left: 36px;
    top: -3.5px;
    width: 2px;
    height: 8px;
    background: #777;
}

.z-pct {
    margin-left: 9px;
    font-size: 9px;
}

.z-fit {
    margin: 0 6px 0 9px;
}

/* taskbar */
.taskbar {
    display: flex;
    align-items: center;
    height: 28px;
    background: #0d0d10;
    color: #e4e4e4;
    flex: none;
}

.tb-start {
    margin-left: 11px;
    flex: none;
}

.tb-search {
    display: flex;
    align-items: center;
    gap: 8px;
    width: 245px;
    height: 28px;
    margin-left: 11px;
    padding-left: 7px;
    background: #f2f2f2;
    font-size: 10px;
    color: #333;
}

.tb-mic {
    margin-left: auto;
    margin-right: 10px;
}

.tb-view {
    margin: 0 13px 0 11px;
    flex: none;
}

.tb-app {
    display: flex;
    align-items: center;
    justify-content: center;
    width: 30px;
    height: 28px;
    margin-right: 3px;
    border-bottom: 2px solid #76b9ed;
    flex: none;
}

.tb-first {
    margin-left: 3px;
    margin-right: 2px;
}

.tb-active {
    width: 34px;
    margin-right: 1px;
    background-color: #3d3d3d;
}

.tray {
    display: flex;
    align-items: center;
    gap: 6px;
    margin-left: auto;
    height: 28px;
    padding-right: 18px;
}

.tr-up {
    margin-left: 6px;
}

.tr-ime {
    font-size: 10.5px;
}

.clock {
    display: flex;
    flex-direction: column;
    align-items: center;
    margin: 0 9px 0 6px;
    font-size: 9px;
    line-height: 13px;
}

/* overlays from the video player */
.stamp {
    position: absolute;
    left: 600px;
    top: 0;
    font-size: 25px;
    font-weight: 700;
    line-height: 27px;
    color: #fff;
    text-shadow: 1px 1px 1px #000, -1px 1px 1px #000, 1px -1px 1px #000, -1px -1px 1px #000;
}

.player {
    position: absolute;
    left: 1269px;
    top: 613px;
    width: 62px;
    height: 56px;
}
```
